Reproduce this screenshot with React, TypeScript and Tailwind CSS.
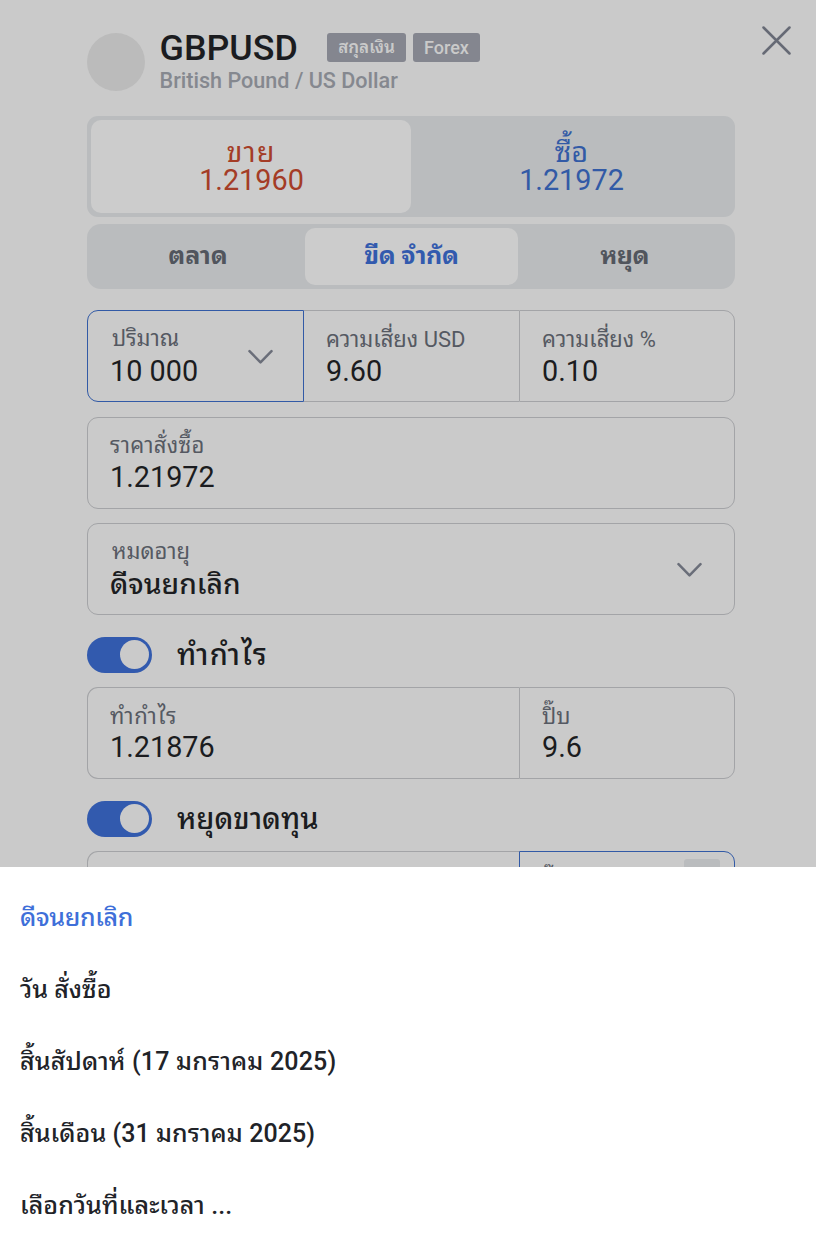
import type { ReactNode } from 'react';

function Chevron() {
  return (
    <svg width="26" height="16" viewBox="0 0 26 16" fill="none" stroke="#6a6e79" strokeWidth="2.5" strokeLinecap="round" strokeLinejoin="round">
      <path d="M1.5 2.2l11 11.2L23.5 2.2" />
    </svg>
  );
}

function Field({ label, value, className = '', labelClass = '', valueClass = '', chevron = '' }: {
  label: string; value: string; className?: string; labelClass?: string; valueClass?: string; chevron?: string;
}) {
  return (
    <div className={`flex h-[92px] justify-between border border-[#a3a4a7] pl-[22px] pt-[13px] ${className}`}>
      <div className="whitespace-nowrap">
        <div className={`h-[30px] text-[22px] leading-[30px] text-[#555962] ${labelClass}`}>{label}</div>
        <div className={`h-[34px] text-[28.8px] leading-[34px] text-[#1b1c20] ${valueClass}`}>{value}</div>
      </div>
      {chevron && <div className={chevron}><Chevron /></div>}
    </div>
  );
}

function Toggle({ children, textClass = '' }: { children: ReactNode; textClass?: string }) {
  return (
    <div className="flex h-9 items-center">
      <div className="flex h-9 w-[65px] items-start justify-end rounded-full bg-[#325aae] pr-[3px] pt-[3px]">
        <div className="h-[29px] w-[29px] rounded-full bg-[#cacaca]" />
      </div>
      <div className={`ml-[25px] whitespace-nowrap text-[29px] leading-9 text-[#1b1c20] ${textClass}`}>{children}</div>
    </div>
  );
}

export default function App() {
  return (
    <div className="h-[1246px] w-[816px] overflow-hidden bg-[#cacaca] font-['Roboto','Noto_Sans_Thai_Looped','Noto_Sans_Thai',sans-serif]">
      <div className="flex h-[867px] flex-col overflow-hidden pl-[87px]">
        <header className="flex h-[116px] shrink-0">
          <div className="mt-[33px] h-[58px] w-[58px] rounded-full bg-[#bbbbbb]" />
          <div className="ml-[14.5px] w-[167.5px] whitespace-nowrap pt-[28px]">
            <div className="h-[40px] text-[35.8px] font-medium leading-[40px] text-[#1b1c20]">GBPUSD</div>
            <div className="h-[26px] text-[21.6px] font-medium leading-[26px] text-[#85888f]">British Pound / US Dollar</div>
          </div>
          <div className="mt-[33px] flex h-[29px] gap-[7px] text-[18px] font-medium leading-[29px] text-[#cacaca]">
            <div className="w-[79px] rounded-[3px] bg-[#84868f] text-center text-[17px] font-semibold">สกุลเงิน</div>
            <div className="w-[67px] rounded-[3px] bg-[#84868f] text-center">Forex</div>
          </div>
          <svg className="ml-[281px] mt-[25px]" width="31" height="31" viewBox="0 0 31 31" fill="none" stroke="#666a75" strokeWidth="2.5" strokeLinecap="round">
            <path d="M2.5 2.5l26 26M28.5 2.5l-26 26" />
          </svg>
        </header>

        <div className="flex h-[101px] w-[648px] shrink-0 rounded-[11px] bg-[#babcbe] p-1 text-center text-[28.8px] leading-7">
          <div className="h-[93px] w-[320px] rounded-[10px] bg-[#cccccc] pt-[18px] text-[#a43c26]">
            <div className="h-7 tracking-[1px]">ขาย</div>
            <div className="h-7 pl-px">1.21960</div>
          </div>
          <div className="h-[93px] w-[320px] pt-[18px] text-[#325aa6]">
            <div className="h-7 pl-px">ซื้อ</div>
            <div className="h-7 pl-px">1.21972</div>
          </div>
        </div>

        <div className="mt-[7px] flex h-[65px] w-[648px] shrink-0 rounded-[14px] bg-[#babcbe] p-1 text-center text-[25px] font-bold leading-[55px] text-[#51555d]">
          <div className="w-[214px]">ตลาด</div>
          <div className="h-[57px] w-[213px] rounded-[10px] bg-[#cccccc] tracking-[-0.3px] text-[#325aae]">ขีด จำกัด</div>
          <div className="w-[213px] tracking-[-0.6px]">หยุด</div>
        </div>

        <div className="mt-[21px] flex w-[648px] shrink-0">
          <Field label="ปริมาณ" value="10 000" className="w-[217px] rounded-l-[11px] border-[#325aa6]!" chevron="mr-[29px] mt-[25px]" labelClass="pl-[2px]" />
          <Field label="ความเสี่ยง USD" value="9.60" className="w-[215px] border-x-0 pt-[14px]!" valueClass="-mt-px" />
          <Field label="ความเสี่ยง %" value="0.10" className="w-[216px] rounded-r-[11px] pt-[14px]!" valueClass="-mt-px" />
        </div>
        <Field label="ราคาสั่งซื้อ" value="1.21972" className="mt-[15px] w-[648px] shrink-0 rounded-[11px]" labelClass="tracking-[0.3px]" valueClass="-mt-px" />
        <Field label="หมดอายุ" value="ดีจนยกเลิก" className="mt-[14px] w-[648px] shrink-0 rounded-[11px]" chevron="mr-[31px] mt-[25px]" labelClass="pl-[2px]" valueClass="mt-px text-[28.2px]! font-medium" />

        <div className="mt-[22px] shrink-0"><Toggle textClass="tracking-[1.5px] font-medium">ทำกำไร</Toggle></div>
        <div className="mt-[14px] flex w-[648px] shrink-0">
          <Field label="ทำกำไร" value="1.21876" className="w-[432px] rounded-l-[11px] border-r-0 pt-[14px]!" labelClass="tracking-[0.9px]" valueClass="-mt-[2px]" />
          <Field label="ปิ๊บ" value="9.6" className="w-[216px] rounded-r-[11px] pt-[14px]!" valueClass="-mt-[2px]" />
        </div>
        <div className="mt-[22px] shrink-0"><Toggle textClass="font-medium">หยุดขาดทุน</Toggle></div>
        <div className="mt-[14px] flex w-[648px] shrink-0">
          <div className="h-[92px] w-[432px] rounded-l-[11px] border border-r-0 border-[#a3a4a7]" />
          <div className="flex h-[92px] w-[216px] justify-between rounded-r-[11px] border border-[#325aa6] pl-[22px] pr-[14px]">
            <div className="pt-[14px] text-[22px] leading-[30px] text-[#555962]">ปิ๊บ</div>
            <div className="mt-[7px] h-9 w-9 rounded-[3px] bg-[#babcbe]" />
          </div>
        </div>
      </div>

      <div className="h-[379px] bg-white pl-5 pt-[15px] text-[25px] font-medium text-[#212328]">
        <div className="h-[72px] leading-[72px] tracking-[-0.35px] text-[#3e6fd9]">ดีจนยกเลิก</div>
        <div className="h-[72px] leading-[72px]">วัน สั่งซื้อ</div>
        <div className="h-[72px] leading-[72px] tracking-[0.17px]">สิ้นสัปดาห์ (17 มกราคม 2025)</div>
        <div className="h-[72px] leading-[72px] tracking-[0.05px]">สิ้นเดือน (31 มกราคม 2025)</div>
        <div className="h-[72px] leading-[72px] tracking-[0.1px]">เลือกวันที่และเวลา ...</div>
      </div>
    </div>
  );
}
